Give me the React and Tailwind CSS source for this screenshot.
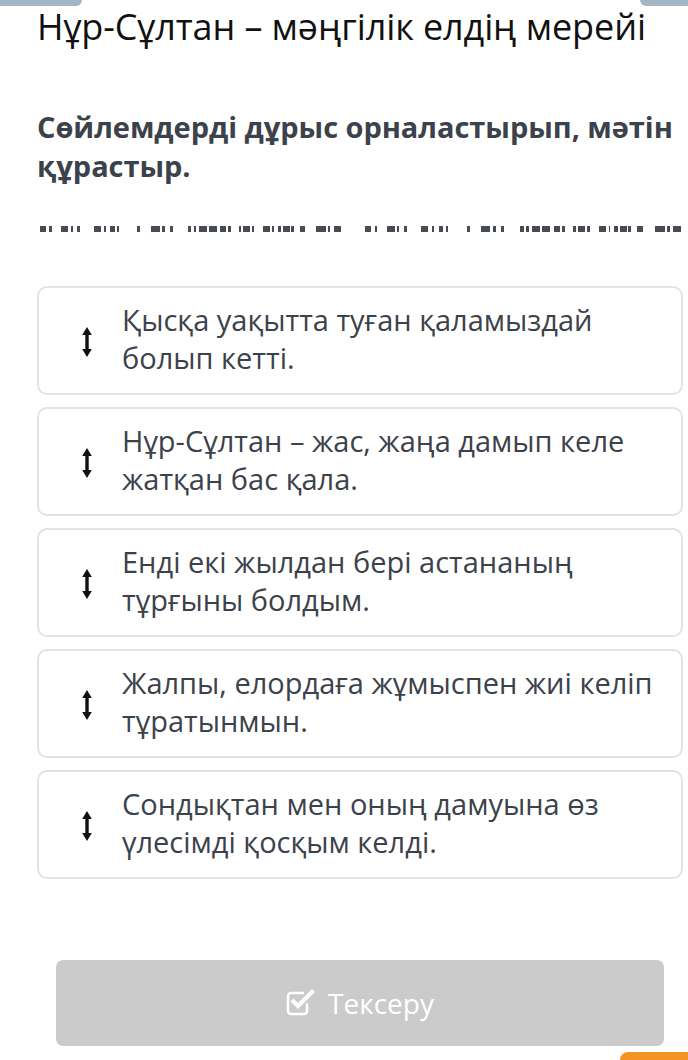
const DASHES = [
  [39.7, 46.3], [49.4, 52], [60.9, 68.4], [70.6, 72.8], [77.2, 80.3], [94, 100.6], [103.7, 105.9],
  [110.3, 114.7], [117.3, 119.5], [137.6, 140.3], [151.3, 159.7], [162.3, 165], [169.8, 172.9],
  [188.4, 191.4], [194, 196.7], [199.4, 207.3], [209, 217], [220.6, 225.8], [228.5, 231.1],
  [239, 241.7], [243.5, 250.5], [252.3, 254.5], [263.3, 270], [272.6, 274.4], [277.9, 281.4],
  [283.2, 290.3], [291.1, 294.2], [300, 305.2], [316.7, 326.4], [328.6, 330.8], [334.4, 341.8],
];

const SENTENCES = [
  'Қысқа уақытта туған қаламыздай болып кетті.',
  'Нұр-Сұлтан – жас, жаңа дамып келе жатқан бас қала.',
  'Енді екі жылдан бері астананың тұрғыны болдым.',
  'Жалпы, елордаға жұмыспен жиі келіп тұратынмын.',
  'Сондықтан мен оның дамуына өз үлесімді қосқым келді.',
];

function DashRow() {
  // two copies of the same pattern, the second one slightly stretched
  const segs = [];
  DASHES.forEach(([a, b]) => segs.push([a, b]));
  const k = (682 - 365) / (341.8 - 39.7);
  DASHES.forEach(([a, b]) => segs.push([365 + (a - 39.7) * k, 365 + (b - 39.7) * k]));
  let cursor = 0;
  return (
    <div className="flex h-[6px] w-full items-stretch">
      {segs.map(([a, b], i) => {
        const ml = a - cursor;
        cursor = b;
        return (
          <span
            key={i}
            className="shrink-0 bg-[#474c54]"
            style={{ marginLeft: ml, width: b - a }}
          />
        );
      })}
    </div>
  );
}

function SortIcon() {
  return (
    <svg width="10" height="30" viewBox="0 0 10 30" className="shrink-0">
      <path d="M5 0 L9.8 8 H6.7 V22 H9.8 L5 30 L0.2 22 H3.3 V8 H0.2 Z" fill="#111" />
    </svg>
  );
}

function CheckSquare() {
  return (
    <svg width="30" height="28" viewBox="0 0 30 28" fill="none" className="shrink-0">
      <path d="M21 14.5 V22 a3 3 0 0 1 -3 3 H5 a3 3 0 0 1 -3 -3 V7 a3 3 0 0 1 3 -3 H18" stroke="#fff" strokeWidth="2.6" />
      <path d="M7.5 12.5 L12 17 L26 3" stroke="#fff" strokeWidth="4.2" strokeLinecap="square" />
    </svg>
  );
}

export default function App() {
  return (
    <div className="relative h-[1060px] w-[688px] overflow-hidden bg-white font-['Open_Sans',sans-serif]">
      {/* top tabs */}
      <div className="flex justify-between">
        <div className="h-[6px] w-[82px] rounded-br-[8px] bg-[#a3b6c5]" />
        <div className="h-[6px] w-[48px] rounded-bl-[8px] bg-[#a3b6c5]" />
      </div>

      <h1 className="-mt-[1px] px-[37px] text-[36px] leading-[44px] font-normal tracking-[-0.1px] text-[#111]">
        Нұр-Сұлтан – мәңгілік елдің мерейі
      </h1>

      <p className="mt-[58px] pl-[37px] text-[29px] font-bold leading-[39px] tracking-[-0.05px] text-[#3c424b]">
        Сөйлемдерді дұрыс орналастырып, мәтін құрастыр.
      </p>

      <div className="mt-[41px]">
        <DashRow />
      </div>

      <div className="mt-[54px] flex flex-col gap-[12px] pl-[37px] pr-[5px]">
        {SENTENCES.map((s) => (
          <div
            key={s}
            className="flex h-[109px] items-center rounded-[10px] border-2 border-[#e3e3e3] bg-white"
          >
            <div className="flex shrink-0 pl-[43px] pr-[30px] pt-[2px]">
              <SortIcon />
            </div>
            <div className="pr-[20px] pb-[3px] text-[29px] leading-[38px] text-[#3c424b]">{s}</div>
          </div>
        ))}
      </div>

      <div className="mt-[81px] pl-[56px] pr-[24px]">
        <button className="flex h-[86px] w-full items-center justify-center gap-[12px] rounded-[7px] bg-[#cbcbcb] text-[28px] text-white">
          <CheckSquare />
          <span>Тексеру</span>
        </button>
      </div>

      <div className="absolute bottom-0 right-0 h-[8px] w-[68px] rounded-tl-[8px] bg-[#f39325]" />
    </div>
  );
}
